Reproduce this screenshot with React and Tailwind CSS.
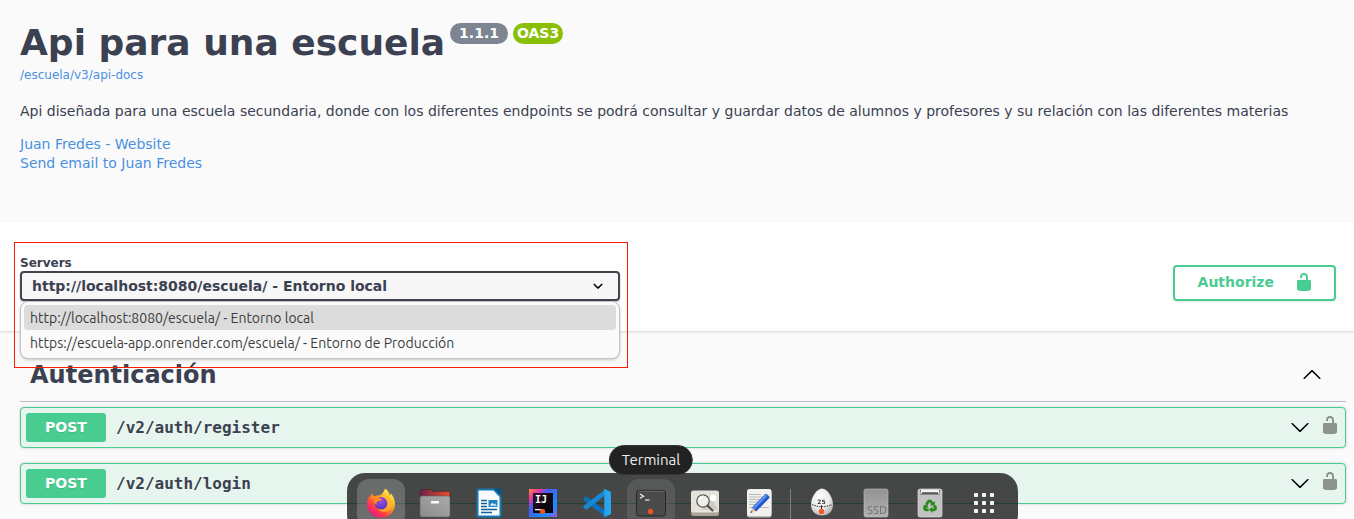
import React from "react";

const UNLOCKED =
  "M15.8 8H14V5.6C14 2.703 12.665 1 10 1 7.334 1 6 2.703 6 5.6V6h2v-.801C8 3.754 8.797 3 10 3c1.203 0 2 .754 2 2.199V8H4c-.553 0-1 .646-1 1.199V17c0 .549.428 1.139.951 1.307l1.197.387C5.672 18.861 6.55 19 7.1 19h5.8c.549 0 1.428-.139 1.951-.307l1.196-.387c.524-.167.953-.757.953-1.306V9.199C17 8.646 16.352 8 15.8 8z";
const ARROW =
  "M17.418 6.109c.272-.268.709-.268.979 0s.271.701 0 .969l-7.908 7.83c-.27.268-.707.268-.979 0l-7.908-7.83c-.27-.268-.27-.701 0-.969.271-.268.709-.268.979 0L10 13.25l7.418-7.141z";
const SELECT_ARROW =
  "M13.418 7.859c.271-.268.709-.268.978 0 .27.268.272.701 0 .969l-3.908 3.83c-.27.268-.707.268-.979 0l-3.908-3.83c-.27-.267-.27-.701 0-.969.271-.268.709-.268.978 0L10 11l3.418-3.141z";

const SERVERS = [
  "http://localhost:8080/escuela/ - Entorno local",
  "https://escuela-app.onrender.com/escuela/ - Entorno de Producción",
];

function Glyph({ d, className }) {
  return (
    <svg viewBox="0 0 20 20" className={"size-5 shrink-0 fill-current " + (className || "")} aria-hidden="true">
      <path d={d} />
    </svg>
  );
}

function ApiInfo() {
  return (
    <header className="px-5 pt-[21px] pb-[49px] text-sm">
      <div className="flex items-start gap-[5px]">
        <h1 className="text-4xl leading-[44px] font-bold">Api para una escuela</h1>
        <span className="mt-[2px] rounded-full bg-[#7d8492] px-[9px] leading-[21px] font-bold text-white">1.1.1</span>
        <span className="mt-[2px] rounded-full bg-[#89bf04] px-1 leading-[21px] font-bold text-white">OAS3</span>
      </div>
      <a href="#api-docs" className="block text-xs leading-5 text-[#4990e2]">
        /escuela/v3/api-docs
      </a>
      <p className="mt-4 leading-5">
        Api diseñada para una escuela secundaria, donde con los diferentes endpoints se podrá consultar y guardar datos
        de alumnos y profesores y su relación con las diferentes materias
      </p>
      <address className="mt-[14px] flex flex-col items-start leading-[19px] text-[#4990e2] not-italic">
        <a href="#website">Juan Fredes - Website</a>
        <a href="#email">Send email to Juan Fredes</a>
      </address>
    </header>
  );
}

function ServerPicker() {
  return (
    <div className="relative w-[600px]">
      <div className="pointer-events-none absolute -top-[14px] -right-2 -bottom-[67px] -left-[6px] z-20 border border-[#fb1c05]" />
      <label htmlFor="servers" className="block text-xs leading-[15px] font-bold">
        Servers
      </label>
      <div className="relative">
        <select
          id="servers"
          className="block h-[30px] w-full appearance-none rounded border-2 border-[#41444e] bg-[#f7f7f7] pr-10 pl-[10px] text-sm font-bold shadow-[0_1px_2px_rgba(0,0,0,0.25)]"
        >
          {SERVERS.map((s) => (
            <option key={s}>{s}</option>
          ))}
        </select>
        <Glyph d={SELECT_ARROW} className="pointer-events-none absolute top-[5px] right-3 text-black" />
      </div>
      <ul
        role="listbox"
        aria-label="Servers"
        className="absolute top-full right-0 left-0 z-10 rounded-lg border border-[#c4c4c4] bg-[#fafafa] p-[3px] font-['Ubuntu','Noto_Sans',sans-serif] text-sm text-[#3d3d3d] shadow-[0_1px_3px_rgba(0,0,0,0.2)]"
      >
        {SERVERS.map((s, i) => (
          <li
            key={s}
            role="option"
            aria-selected={i === 0}
            className="rounded px-[6px] pt-[2px] leading-[23px] aria-selected:bg-[#dcdcdc]"
          >
            {s}
          </li>
        ))}
      </ul>
    </div>
  );
}

function SchemeBar() {
  return (
    <section className="flex items-end justify-between bg-white pt-[34px] pr-[18px] pb-[30px] pl-5 shadow-[0_1px_2px_rgba(0,0,0,0.15)]">
      <ServerPicker />
      <button
        type="button"
        className="flex h-9 items-center gap-5 rounded border-2 border-[#49cc90] pr-5 pb-[2px] pl-[23px] text-sm leading-5 font-bold text-[#49cc90] shadow-[0_1px_2px_rgba(0,0,0,0.1)]"
      >
        Authorize
        <Glyph d={UNLOCKED} />
      </button>
    </section>
  );
}

function Operation({ path }) {
  return (
    <article className="flex h-[41px] items-center rounded border border-[#49cc90] bg-[#e6f5ed] pr-[5px] pl-[5px] shadow-[0_0_3px_rgba(0,0,0,0.19)]">
      <span className="w-20 rounded-[3px] bg-[#49cc90] text-center text-sm leading-[29px] font-bold text-white [text-shadow:0_1px_0_rgba(0,0,0,0.1)]">
        POST
      </span>
      <a href="#operation" className="grow px-[10px] font-['DejaVu_Sans_Mono',monospace] text-base font-bold">
        {path}
      </a>
      <button type="button" aria-label="Expand" className="mb-[2px] text-black">
        <Glyph d={ARROW} />
      </button>
      <button type="button" aria-label="Authorization" className="mb-[6px] ml-[10px] text-[#8a938e]">
        <Glyph d={UNLOCKED} />
      </button>
    </article>
  );
}

function TagSection() {
  return (
    <section className="pt-[18px] pr-2 pl-5">
      <h2 className="mb-[5px] flex items-center justify-between border-b border-[#bdbdbf] pt-[10px] pr-6 pb-[10px] pl-[10px] text-2xl leading-8 font-bold">
        Autenticación
        <button type="button" aria-label="Collapse" className="text-black">
          <Glyph d={ARROW} className="rotate-180" />
        </button>
      </h2>
      <div className="flex flex-col gap-[15px]">
        <Operation path="/v2/auth/register" />
        <Operation path="/v2/auth/login" />
      </div>
    </section>
  );
}

const ICONS = {
  Firefox: (
    <>
      <defs>
        <linearGradient id="ffa" x1=".85" y1=".1" x2=".2" y2=".95">
          <stop offset="0" stopColor="#fff14a" />
          <stop offset=".4" stopColor="#ff9a22" />
          <stop offset=".7" stopColor="#ff4242" />
          <stop offset="1" stopColor="#e6158c" />
        </linearGradient>
        <radialGradient id="ffb" cx=".5" cy=".3" r=".7">
          <stop offset="0" stopColor="#a14fe0" />
          <stop offset="1" stopColor="#5136c4" />
        </radialGradient>
      </defs>
      <path d="M20 1.500c3 2 4.500 4.500 4.800 7 .8-.5 1-1.500 1-2.500 3 4 4.200 7.500 4.200 11A14 13.700 0 0 1 2 17c0-3.500 1.200-6 2.500-8l.5 1.500C5.500 8.500 7 7 8 6.300c-.2 1.700.2 2.700 1 3.200 1.500-1 3-1.200 4.500-1 3.500-.2 5.500-4 6.500-7z" fill="url(#ffa)" />
      <circle cx="16" cy="16.300" r="6.200" fill="url(#ffb)" />
      <path d="M5 10.500C8 8.500 11 9 13.500 10.800c1 .7 2 .8 3.500.9-.3 1.500-1.800 2.200-4 2.500-1.500.3-2 1.800-1 3.500-2.500-.5-3.500-3-2.500-5-1.500-1-3-1.700-4.500-2.200z" fill="#ff8a1f" />
      <path d="M18.500 10c4 1.500 5.500 6 3.500 9.500-2 3.200-6 4-9.500 2 3 4 9 4.500 12.500 1 3.500-4 2.500-10-2-13z" fill="#ffba2e" opacity=".75" />
    </>
  ),
  Archivos: (
    <>
      <defs>
        <linearGradient id="fd" x1="0" y1="0" x2="1" y2="0">
          <stop offset="0" stopColor="#6d2148" />
          <stop offset="1" stopColor="#e65024" />
        </linearGradient>
        <linearGradient id="fg" x1="0" y1="1" x2="1" y2="0">
          <stop offset="0" stopColor="#8c8c8c" />
          <stop offset="1" stopColor="#aaa" />
        </linearGradient>
      </defs>
      <path d="M1 4.500Q1 2.500 3 2.500h8q1.500 0 2 1l.5.800H29q2 0 2 2V14H1z" fill="url(#fd)" stroke="#40222c" strokeWidth=".7" />
      <rect x="1" y="9" width="30" height="21" rx="2" fill="url(#fg)" stroke="#5e5e5e" strokeWidth=".6" />
      <rect x="12" y="14" width="8" height="2.400" rx=".5" fill="#fafafa" />
    </>
  ),
  Writer: (
    <>
      <path d="M6 2.500h15l6.500 7V28q0 1.500-1.500 1.500H6q-1.500 0-1.500-1.500V4Q4.500 2.500 6 2.500z" fill="#fafcfd" stroke="#1479b8" strokeWidth="2" />
      <path d="M21 1.500h6.500q1 0 1 1V9z" fill="#075583" />
      <path d="M8 13.500h6M8 16.500h6M8 19.500h6M8 22.500h16M8 25.500h11" stroke="#12609a" strokeWidth="1.300" />
      <rect x="15.500" y="13" width="9" height="7" fill="#1f83c4" />
      <path d="M16.500 18.800l2.800-3 2 1.800 1-1 1.500 2.200z" fill="#d8edf9" />
    </>
  ),
  "IntelliJ IDEA": (
    <>
      <defs>
        <linearGradient id="ij" x1="0" y1="0" x2="1" y2="1">
          <stop offset="0" stopColor="#ff8a3d" />
          <stop offset=".2" stopColor="#ee359f" />
          <stop offset=".36" stopColor="#475df2" />
          <stop offset=".75" stopColor="#178cff" />
          <stop offset="1" stopColor="#9a59d8" />
        </linearGradient>
        <linearGradient id="ik" x1="0" y1="0" x2="1" y2="1">
          <stop offset="0" stopColor="#3a1236" />
          <stop offset=".6" stopColor="#0b0710" />
        </linearGradient>
      </defs>
      <rect x="2" y="2" width="28" height="28" fill="url(#ij)" />
      <rect x="6" y="6" width="20" height="20" fill="url(#ik)" />
      <text x="8" y="15.500" fill="#fff" fontSize="10" fontWeight="bold" fontFamily="DejaVu Sans Mono, monospace">IJ</text>
      <rect x="8" y="22" width="7" height="1.300" fill="#fff" />
      <circle cx="15.500" cy="24.400" r="2.700" fill="#e95420" />
    </>
  ),
  "Visual Studio Code": (
    <>
      <path d="M2.500 11.500l2-1.800q.8-.6 1.600 0L24 23.500v6L2.500 13q-.8-.8 0-1.500z" fill="#0b73bd" />
      <path d="M2.500 20.500l2 1.800q.8.6 1.600 0L24 8.500v-6L2.500 19q-.8.800 0 1.500z" fill="#1688d1" />
      <path d="M23 2.200q.6-.3 1.200 0l5 2.400q.8.400.8 1.300v20.200q0 .9-.8 1.300l-5 2.400q-.9.400-1.700-.3.800.2.800-1V3.500q0-1-.8-1z" fill="#2ba4ee" />
    </>
  ),
  Terminal: (
    <>
      <rect x="1.500" y="3.300" width="29" height="25.700" rx="2.500" fill="#4a4a4a" stroke="#262626" />
      <path d="M3.500 4.200h25" stroke="#777" strokeWidth=".7" />
      <path d="M5 7l3.600 2.200L5 11.300" fill="none" stroke="#eee" strokeWidth="1.200" />
      <path d="M10 13h4.500" stroke="#eee" strokeWidth="1.200" />
      <circle cx="15.500" cy="24.400" r="2.700" fill="#e95420" />
    </>
  ),
  "Visor de imágenes": (
    <>
      <rect x="2" y="6" width="28" height="23" rx="2.500" fill="#aaa497" />
      <rect x="2" y="3.500" width="28" height="22" rx="2.500" fill="#e4e2d9" />
      <path d="M13 23L21 8l8 15z" fill="#cfccc0" />
      <circle cx="24" cy="11" r="3.300" fill="#fff" />
      <circle cx="14" cy="14" r="6.200" fill="#f3f2ed" fillOpacity=".8" stroke="#555" strokeWidth="1.200" />
      <path d="M10 12q1.500-3 4.500-3" fill="none" stroke="#fff" strokeWidth="1.200" />
      <path d="M18.500 18.500l5 5" stroke="#4d4d4d" strokeWidth="2" strokeLinecap="round" />
    </>
  ),
  "Editor de texto": (
    <>
      <rect x="4" y="3" width="24.500" height="27.500" rx="2.500" fill="#bcbcbc" />
      <rect x="4" y="2" width="24.500" height="27" rx="2.500" fill="#f1f1f0" />
      <path d="M6 7.500h12M6 10h14M6 12.500h11M6 15h9M6 17.500h8M6 20.500h20" stroke="#b9b9b5" strokeWidth="1" />
      <path d="M7.500 26L9 20.500 12.500 24z" fill="#edb98b" />
      <path d="M7.500 26l.6-2 1.400 1.300z" fill="#333" />
      <path d="M9 20.500L22 7.200q1-1 2 0l2.200 2q1 1 0 2L13.200 24.500z" fill="#2d65dc" />
      <path d="M10.500 21.500L23.500 8" stroke="#6fa0fb" strokeWidth="1.300" />
      <path d="M12.300 23.500L25.500 10.200" stroke="#1743a9" strokeWidth="1" />
    </>
  ),
  Pomodoro: (
    <>
      <defs>
        <radialGradient id="eg" cx=".42" cy=".35" r=".65">
          <stop offset="0" stopColor="#fff" />
          <stop offset=".65" stopColor="#e9e9e9" />
          <stop offset="1" stopColor="#b8b8b8" />
        </radialGradient>
      </defs>
      <path d="M16 1.500C21 1.500 27 10 27 17.500S22 28.500 16 28.500 5 25 5 17.500 11 1.500 16 1.500z" fill="url(#eg)" />
      <text x="15.500" y="17" textAnchor="middle" fill="#333" fontSize="6" fontWeight="bold" fontFamily="DejaVu Sans, sans-serif">25</text>
      <path d="M6 17.500q10 4.500 20 0" fill="none" stroke="#555" strokeWidth="1.200" strokeDasharray="1.500 1" />
      <path d="M15.500 18v4" stroke="#333" />
      <circle cx="15.500" cy="24.400" r="2.700" fill="#f15a24" />
    </>
  ),
  SSD: (
    <>
      <defs>
        <linearGradient id="sd" x1="0" y1="0" x2="0" y2="1">
          <stop offset="0" stopColor="#929292" />
          <stop offset="1" stopColor="#b2b2b2" />
        </linearGradient>
      </defs>
      <rect x="4" y="2" width="24" height="28" rx="2" fill="url(#sd)" stroke="#c4c4c4" strokeWidth=".6" />
      <text x="17" y="27" textAnchor="middle" fill="#737373" fontSize="11" fontFamily="Noto Sans, sans-serif">SSD</text>
    </>
  ),
  Papelera: (
    <>
      <rect x="4" y="2" width="24" height="28" rx="2" fill="#c2c2c2" stroke="#dadada" strokeWidth=".7" />
      <path d="M6 3h20v4.500H6z" fill="#555" />
      <path d="M7 2.700h18l.7 4.300h-1.200L24 5.300H8L7.500 7H6.300z" fill="#f4f4f4" />
      <g transform="translate(2.600 3.600) scale(.83)">
        <g fill="none" stroke="#258b1c" strokeWidth="3.400">
          <path d="M12 16.500l2-3.300q2-1.700 3.500.3l1.300 2.200" />
          <path d="M21.300 18l1.400 2.500q.5 2.500-2 2.700H18.500" />
          <path d="M14.500 23.200h-3q-2.500-.5-1.700-2.700l1.300-2.200" />
        </g>
        <path d="M16 17.500l5.500.7.8-5.700zM19 19.500v7.600l-4-3.900zM7.500 18.500l5.200-2.700 1.600 5.200z" fill="#258b1c" />
      </g>
    </>
  ),
  "Mostrar aplicaciones": (
    <g fill="#f4f4f4">
      {[6, 14, 22].map((y) => [6, 14, 22].map((x) => <rect key={x + "-" + y} x={x} y={y} width="4" height="4" rx=".8" />))}
    </g>
  ),
};

function DockItem({ name, active, tooltip }) {
  return (
    <button
      type="button"
      aria-label={name}
      className={
        "relative flex size-12 items-center justify-center rounded-xl " +
        (active ? "bg-white/20" : tooltip ? "bg-white/10" : "")
      }
    >
      <svg viewBox="0 0 32 32" className="size-8" aria-hidden="true">
        {ICONS[name]}
      </svg>
      {tooltip && (
        <span className="absolute bottom-full left-1/2 mb-1 -translate-x-1/2 rounded-full border border-[#353535] bg-[#222] px-3 font-['Ubuntu','Noto_Sans',sans-serif] text-[15px] leading-7 text-[#eee]">
          {name}
        </span>
      )}
    </button>
  );
}

function Dock() {
  const names = Object.keys(ICONS);
  return (
    <nav
      aria-label="Dock"
      className="fixed -bottom-[14px] left-[347px] z-30 flex gap-[6px] rounded-[18px] bg-[#1b1b1b]/80 px-[10px] py-[6px]"
    >
      {names.slice(0, 8).map((n) => (
        <DockItem key={n} name={n} active={n === "Firefox"} tooltip={n === "Terminal"} />
      ))}
      <span className="mx-px mt-[10px] w-px bg-white/30" />
      {names.slice(8).map((n) => (
        <DockItem key={n} name={n} />
      ))}
    </nav>
  );
}

export default function App() {
  return (
    <main className="min-h-screen bg-[#fafafa] font-['DejaVu_Sans',sans-serif] text-[#3b4151]">
      <ApiInfo />
      <SchemeBar />
      <TagSection />
      <Dock />
    </main>
  );
}
